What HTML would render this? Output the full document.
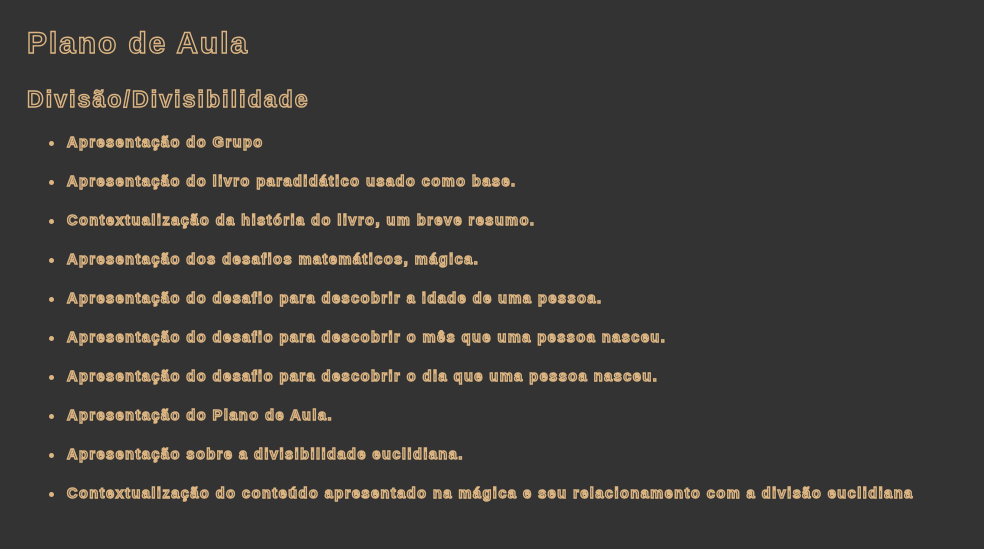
<!DOCTYPE html>
<html><head><meta charset="utf-8"><style>
html,body{margin:0;padding:0;}
body{width:984px;height:549px;background:#333333;overflow:hidden;font-family:"Liberation Sans","DejaVu Sans",sans-serif;}
.o{color:#333333;-webkit-text-stroke:1.4px #dcb582;font-weight:900;}
h1{position:absolute;left:27px;top:26px;margin:0;font-size:30px;line-height:36px;letter-spacing:1.9px;}
h2{position:absolute;left:27px;top:84px;margin:0;font-size:23px;line-height:30px;letter-spacing:2.1px;}
ul{position:absolute;left:0;top:133px;margin:0;padding:0;list-style:none;}
li{position:relative;height:39px;line-height:20px;font-size:14.5px;padding-left:67px;white-space:nowrap;letter-spacing:1.5px;-webkit-text-stroke-width:1.2px;}
li::before{content:"";position:absolute;left:49px;top:8px;width:5px;height:5px;border-radius:50%;background:#dcb582;}
</style></head><body>
<h1 class="o">Plano de Aula</h1>
<h2 class="o">Divisão/Divisibilidade</h2>
<ul>
<li class="o">Apresentação do Grupo</li>
<li class="o">Apresentação do livro paradidático usado como base.</li>
<li class="o">Contextualização da história do livro, um breve resumo.</li>
<li class="o">Apresentação dos desafios matemáticos, mágica.</li>
<li class="o">Apresentação do desafio para descobrir a idade de uma pessoa.</li>
<li class="o">Apresentação do desafio para descobrir o mês que uma pessoa nasceu.</li>
<li class="o">Apresentação do desafio para descobrir o dia que uma pessoa nasceu.</li>
<li class="o">Apresentação do Plano de Aula.</li>
<li class="o">Apresentação sobre a divisibilidade euclidiana.</li>
<li class="o">Contextualização do conteúdo apresentado na mágica e seu relacionamento com a divisão euclidiana</li>
</ul>
</body></html>
